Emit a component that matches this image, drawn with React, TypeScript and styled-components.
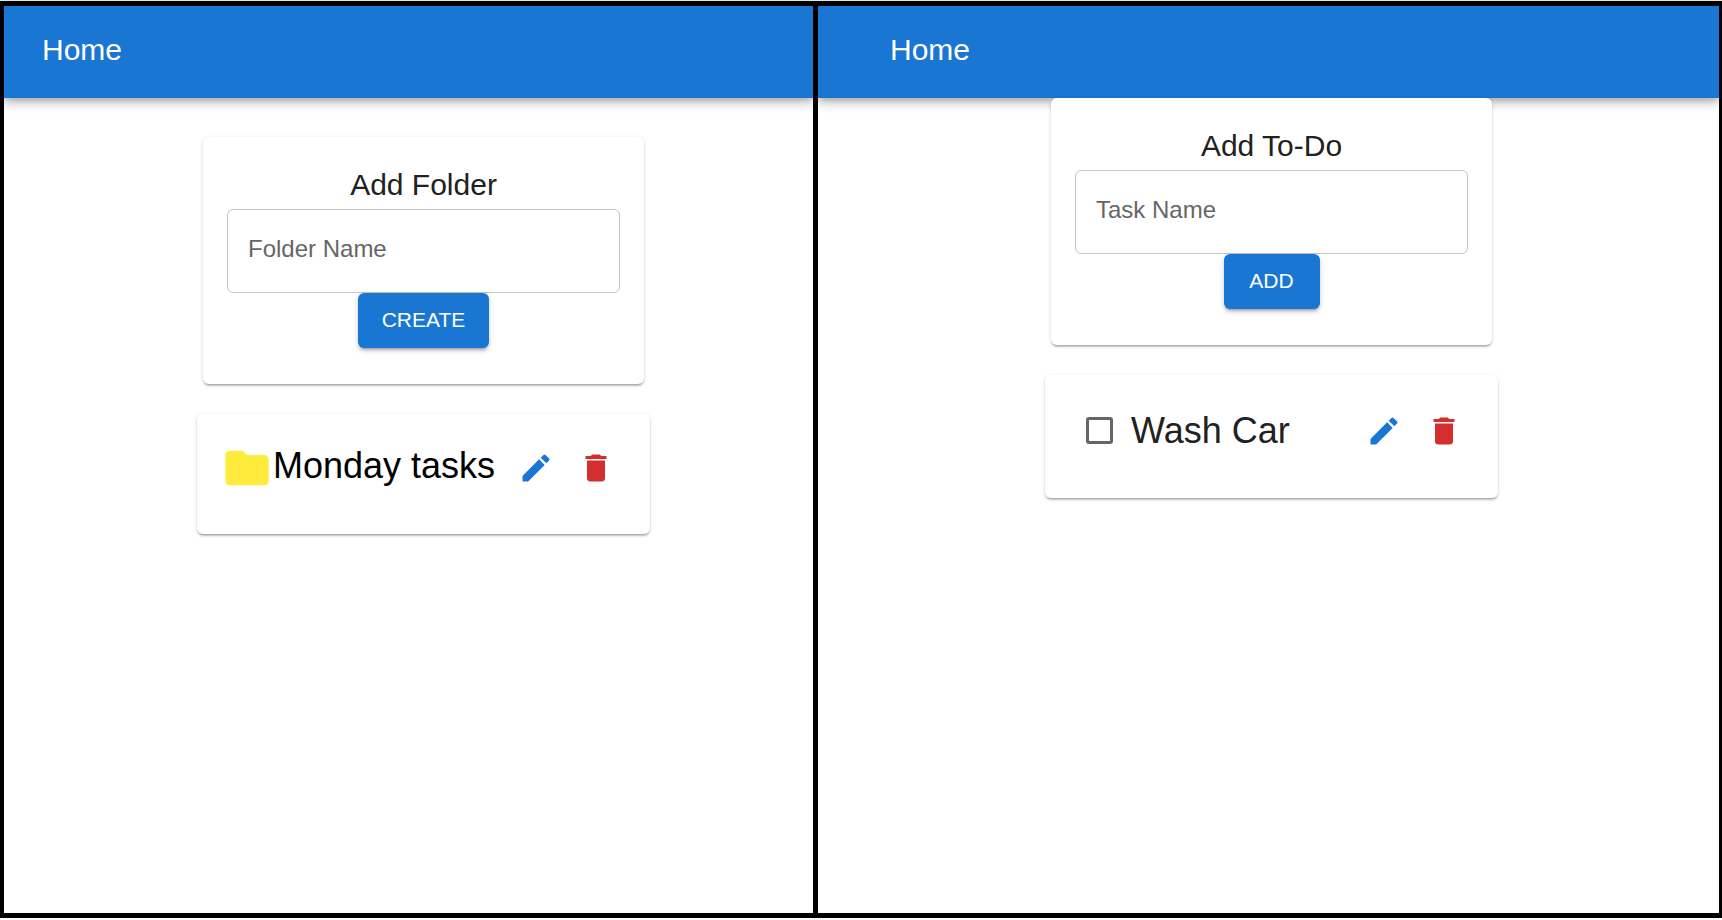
import React, { useId, useState } from "react";
import styled, { createGlobalStyle } from "styled-components";

const GlobalStyle = createGlobalStyle`
  *, *::before, *::after { box-sizing: border-box; }
  body {
    margin: 0;
    background: #fff;
    color: #212121;
    font-family: "Liberation Sans", Arial, sans-serif;
  }
`;

const Page = styled.div`
  min-height: 100vh;
  display: flex;
  flex-direction: column;
  padding-bottom: 2px;
  border-top: 1px solid #dfe6e3;
`;

const Frame = styled.div`
  flex: 1;
  display: grid;
  grid-template-columns: 809fr 901fr;
  gap: 5px;
  padding: 5px 3px 5px 4px;
  background: #000;
`;

const Panel = styled.section`
  min-width: 0;
  overflow: hidden;
  background: #fff;
`;

const AppBar = styled.header<{ $inset: number }>`
  display: flex;
  align-items: center;
  height: 92px;
  padding: 0 36px 4px ${(p) => p.$inset}px;
  background: #1976d2;
  box-shadow: 0 3px 6px -2px rgba(0, 0, 0, 0.2), 0 6px 8px rgba(0, 0, 0, 0.14),
    0 2px 15px rgba(0, 0, 0, 0.12);
`;

const HomeLink = styled.a`
  color: #fff;
  font-size: 30px;
  line-height: 48px;
  text-decoration: none;
`;

const Content = styled.main<{ $top: number; $shift: number }>`
  display: flex;
  flex-direction: column;
  align-items: center;
  gap: 30px;
  padding: ${(p) => p.$top}px 0 36px ${(p) => p.$shift}px;
`;

const Card = styled.div`
  width: 100%;
  padding: 24px 24px 36px;
  border-radius: 6px;
  background: #fff;
  box-shadow: 0 3px 2px -2px rgba(0, 0, 0, 0.2), 0 2px 2px rgba(0, 0, 0, 0.14),
    0 1px 4px rgba(0, 0, 0, 0.12);
`;

const FormCard = styled(Card)`
  max-width: 441px;
`;

const ItemCard = styled(Card)`
  max-width: 453px;
`;

const Form = styled.form`
  display: flex;
  flex-direction: column;
  align-items: center;
`;

const Title = styled.label`
  font-size: 30px;
  line-height: 48px;
`;

const TextField = styled.input`
  width: 100%;
  height: 84px;
  padding: 0 20px 4px;
  border: 1px solid #c4c4c4;
  border-radius: 6px;
  background: transparent;
  color: #212121;
  font-family: inherit;
  font-size: 24px;
  &::placeholder {
    color: #666;
    opacity: 1;
  }
`;

const SubmitButton = styled.button`
  min-width: 96px;
  height: 55px;
  padding: 0 24px 2px;
  border: 0;
  border-radius: 6px;
  background: #1976d2;
  color: #fff;
  font-family: inherit;
  font-size: 21px;
  text-transform: uppercase;
  cursor: pointer;
  box-shadow: 0 4px 2px -3px rgba(0, 0, 0, 0.2), 0 3px 3px rgba(0, 0, 0, 0.14),
    0 2px 7px rgba(0, 0, 0, 0.12);
`;

const ItemRow = styled.div<{ $height: number }>`
  display: flex;
  align-items: center;
  height: ${(p) => p.$height}px;
`;

const FolderLink = styled.a`
  flex: 1;
  display: flex;
  align-items: center;
  height: 100%;
  color: #000;
  font-size: 36px;
  line-height: 54px;
  text-decoration: none;
  white-space: nowrap;
`;

const FolderName = styled.span`
  padding-bottom: 4px;
`;

const TaskLabel = styled.label`
  flex: 1;
  display: flex;
  align-items: center;
  gap: 18px;
  padding-left: 17px;
  font-size: 36px;
  line-height: 54px;
`;

const Checkbox = styled.input`
  appearance: none;
  width: 27px;
  height: 27px;
  margin: 0;
  border: 3px solid #666;
  border-radius: 3px;
  &:checked {
    border-color: #1976d2;
    background: #1976d2;
  }
`;

const IconButton = styled.button<{ $color: string }>`
  display: flex;
  padding: 12px;
  border: 0;
  border-radius: 50%;
  background: none;
  color: ${(p) => p.$color};
  cursor: pointer;
`;

const Icon = styled.svg<{ $size: number }>`
  width: ${(p) => p.$size}px;
  height: ${(p) => p.$size}px;
  flex: none;
  fill: currentColor;
`;

const FolderIcon = styled(Icon)`
  color: #ffeb3b;
`;

function ItemActions({ name }: { name: string }) {
  return (
    <>
      <IconButton type="button" $color="#1976d2" aria-label={`Edit ${name}`}>
        <Icon $size={36} viewBox="0 0 24 24" aria-hidden="true">
          <path d="M3 17.25V21h3.75L17.81 9.94l-3.75-3.75L3 17.25zM20.71 7.04c.39-.39.39-1.02 0-1.41l-2.34-2.34a.9959.9959 0 0 0-1.41 0l-1.83 1.83 3.75 3.75 1.83-1.83z" />
        </Icon>
      </IconButton>
      <IconButton type="button" $color="#d32f2f" aria-label={`Delete ${name}`}>
        <Icon $size={36} viewBox="0 0 24 24" aria-hidden="true">
          <path d="M6 19c0 1.1.9 2 2 2h8c1.1 0 2-.9 2-2V7H6v12zM19 4h-3.5l-1-1h-5l-1 1H5v2h14V4z" />
        </Icon>
      </IconButton>
    </>
  );
}

interface AddFormProps {
  title: string;
  placeholder: string;
  action: string;
}

function AddForm({ title, placeholder, action }: AddFormProps) {
  const id = useId();
  const [value, setValue] = useState("");
  return (
    <FormCard>
      <Form onSubmit={(e) => e.preventDefault()}>
        <Title htmlFor={id}>{title}</Title>
        <TextField
          id={id}
          type="text"
          placeholder={placeholder}
          value={value}
          onChange={(e) => setValue(e.target.value)}
        />
        <SubmitButton type="submit">{action}</SubmitButton>
      </Form>
    </FormCard>
  );
}

export default function App() {
  return (
    <>
      <GlobalStyle />
      <Page>
        <Frame>
          <Panel>
            <AppBar $inset={38}>
              <HomeLink href="#home">Home</HomeLink>
            </AppBar>
            <Content $top={39} $shift={30}>
              <AddForm title="Add Folder" placeholder="Folder Name" action="Create" />
              <ItemCard>
                <ItemRow $height={60}>
                  <FolderLink href="#monday-tasks">
                    <FolderIcon $size={52} viewBox="0 0 24 24" aria-hidden="true">
                      <path d="M10 4H4c-1.1 0-1.99.9-1.99 2L2 18c0 1.1.9 2 2 2h16c1.1 0 2-.9 2-2V8c0-1.1-.9-2-2-2h-8l-2-2z" />
                    </FolderIcon>
                    <FolderName>Monday tasks</FolderName>
                  </FolderLink>
                  <ItemActions name="Monday tasks" />
                </ItemRow>
              </ItemCard>
            </Content>
          </Panel>
          <Panel>
            <AppBar $inset={72}>
              <HomeLink href="#home">Home</HomeLink>
            </AppBar>
            <Content $top={0} $shift={6}>
              <AddForm title="Add To-Do" placeholder="Task Name" action="Add" />
              <ItemCard>
                <ItemRow $height={63}>
                  <TaskLabel>
                    <Checkbox type="checkbox" />
                    Wash Car
                  </TaskLabel>
                  <ItemActions name="Wash Car" />
                </ItemRow>
              </ItemCard>
            </Content>
          </Panel>
        </Frame>
      </Page>
    </>
  );
}
